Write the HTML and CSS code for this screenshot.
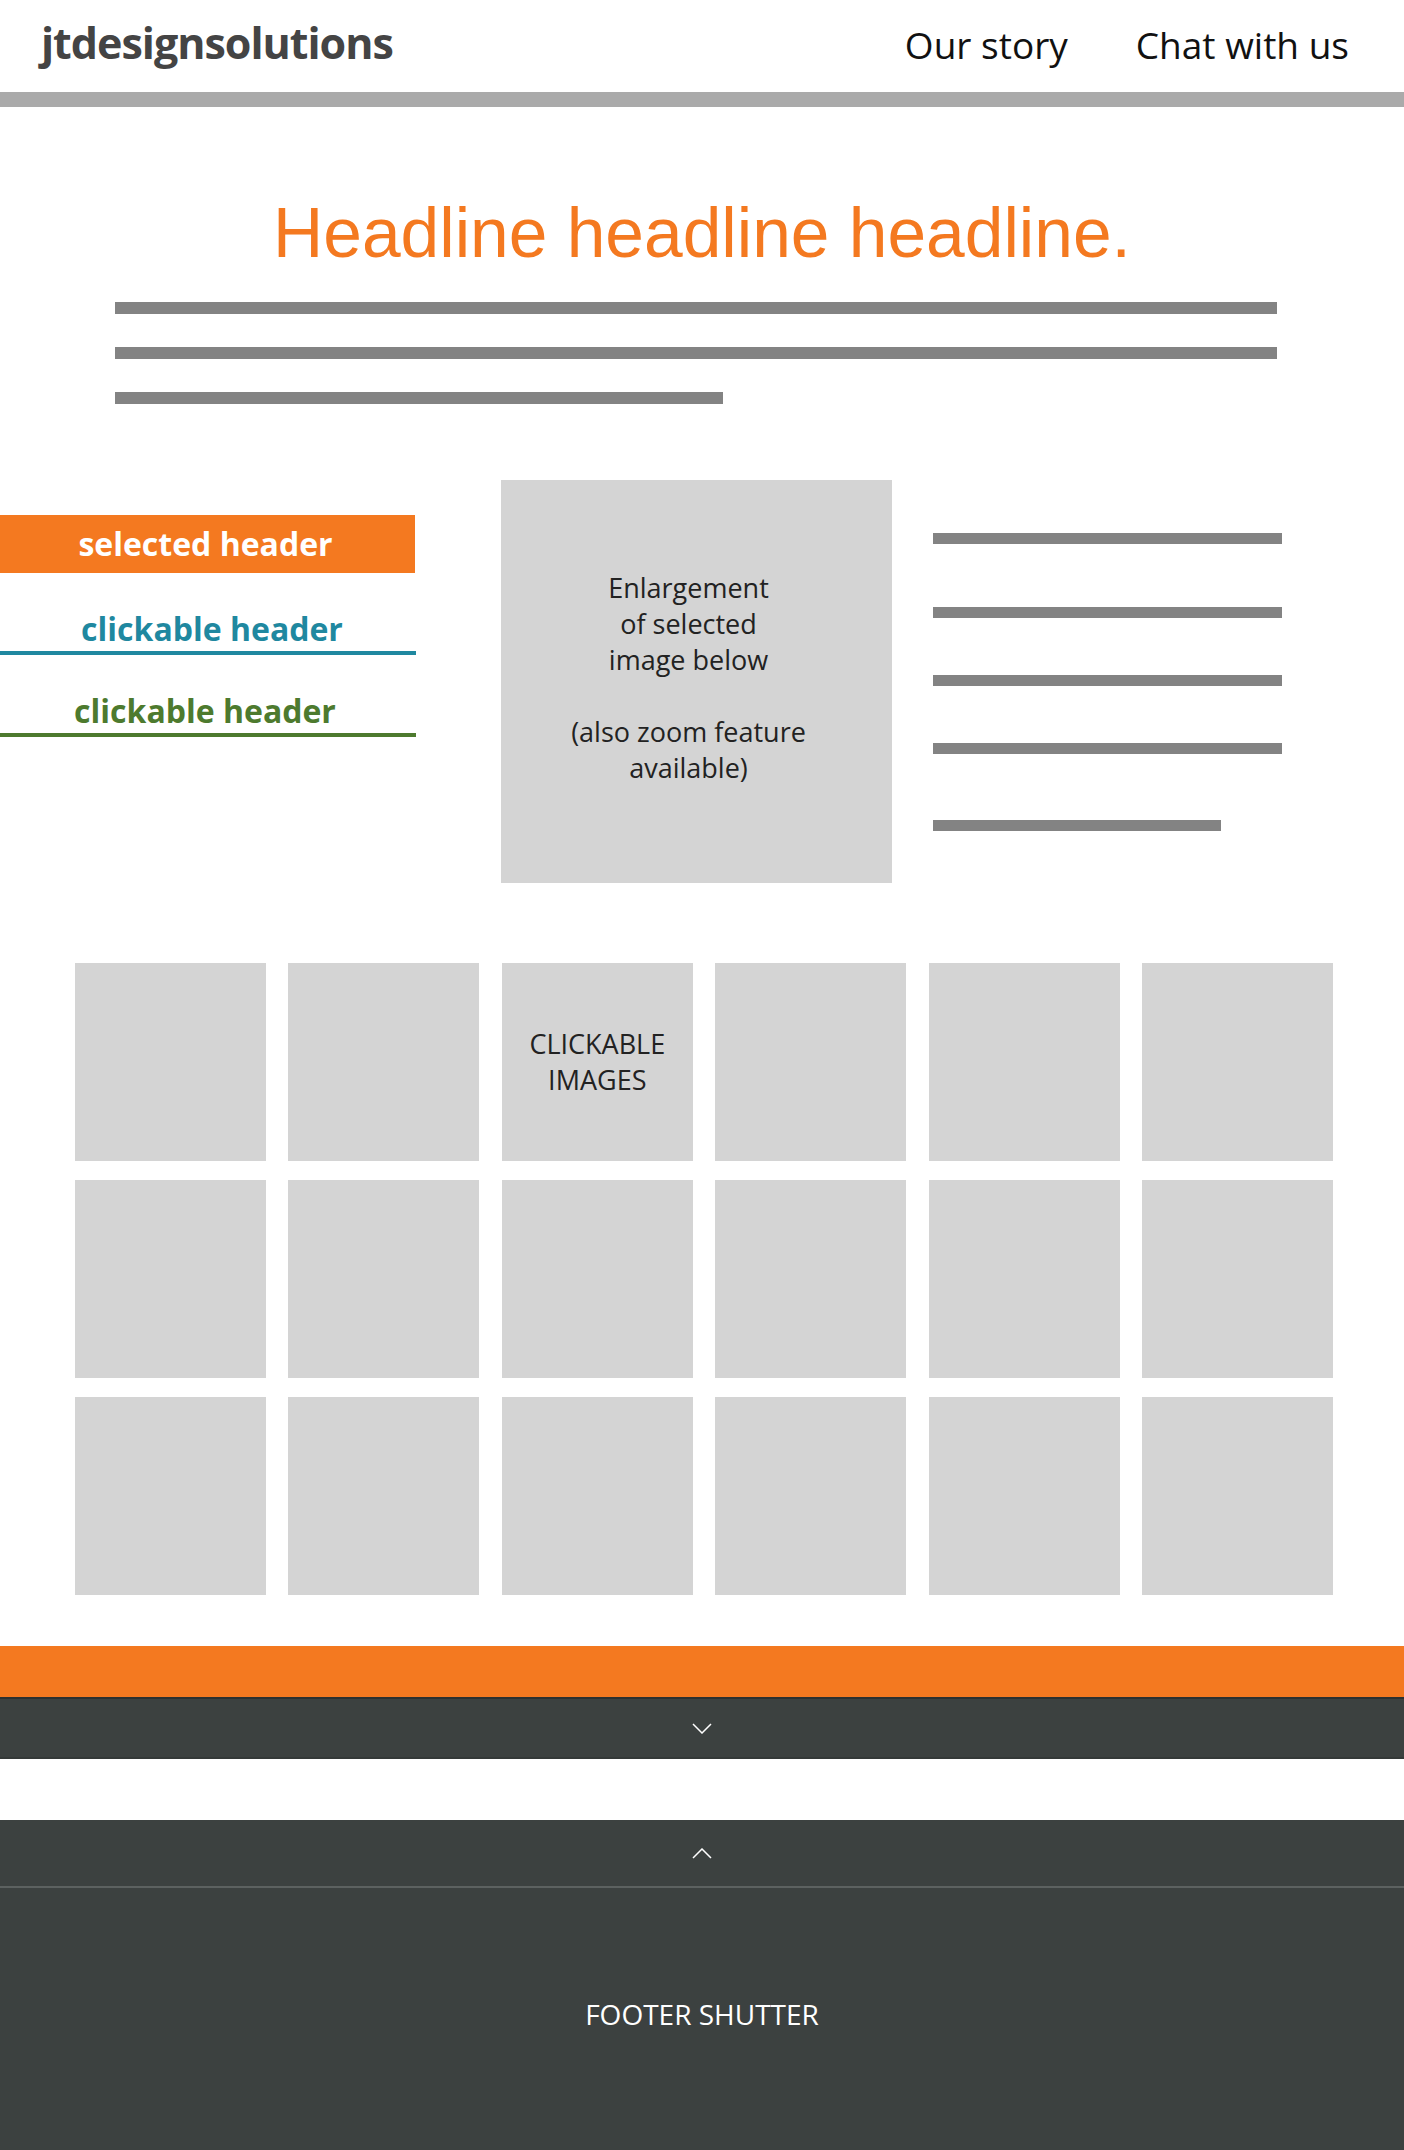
FILE: index.html
```html
<!DOCTYPE html>
<html lang="en">
<head>
    <meta charset="UTF-8">
    <meta name="viewport" content="width=device-width, initial-scale=1.0">
    <title>jtdesignsolutions - gallery wireframe</title>
    <link rel="stylesheet" href="styles.css">
</head>
<body>
    <header class="header">
        <div class="logo">jtdesignsolutions</div>
        <nav class="nav">
            <a href="#">Our story</a>
            <a href="#">Chat with us</a>
        </nav>
    </header>

    <section class="intro">
        <h1 class="headline">Headline headline headline.</h1>
        <div class="text-lines">
            <div class="line"></div>
            <div class="line"></div>
            <div class="line short"></div>
        </div>
    </section>

    <section class="feature">
        <div class="tabs">
            <div class="tab selected">selected header</div>
            <div class="tab teal">clickable header</div>
            <div class="tab green">clickable header</div>
        </div>
        <div class="enlarge">
            <p>Enlargement<br>of selected<br>image below<br><br>(also zoom feature<br>available)</p>
        </div>
        <div class="side-lines">
            <div class="line"></div>
            <div class="line"></div>
            <div class="line"></div>
            <div class="line"></div>
            <div class="line short"></div>
        </div>
    </section>

    <section class="thumbs">
        <div class="thumb"></div>
        <div class="thumb"></div>
        <div class="thumb">CLICKABLE<br>IMAGES</div>
        <div class="thumb"></div>
        <div class="thumb"></div>
        <div class="thumb"></div>
        <div class="thumb"></div>
        <div class="thumb"></div>
        <div class="thumb"></div>
        <div class="thumb"></div>
        <div class="thumb"></div>
        <div class="thumb"></div>
        <div class="thumb"></div>
        <div class="thumb"></div>
        <div class="thumb"></div>
        <div class="thumb"></div>
        <div class="thumb"></div>
        <div class="thumb"></div>
    </section>

    <div class="orange-band"></div>
    <div class="shutter-bar">
        <svg width="20" height="11" viewBox="0 0 20 11"><polyline points="1,1 10,10 19,1" fill="none" stroke="#fff" stroke-width="1.5"/></svg>
    </div>

    <footer class="footer">
        <div class="footer-top">
            <svg width="20" height="11" viewBox="0 0 20 11"><polyline points="1,10 10,1 19,10" fill="none" stroke="#fff" stroke-width="1.5"/></svg>
        </div>
        <div class="footer-body">FOOTER SHUTTER</div>
    </footer>
</body>
</html>
```

FILE: styles.css
```css
* {
    margin: 0;
    padding: 0;
    box-sizing: border-box;
}

body {
    font-family: "Open Sans", "DejaVu Sans", sans-serif;
    background-color: #fff;
    color: #222;
}

.header {
    height: 107px;
    display: flex;
    align-items: center;
    justify-content: space-between;
    padding: 0 55px 4px 41px;
    border-bottom: 15px solid #aaaaaa;
}

.logo {
    font-size: 43px;
    font-weight: 700;
    color: #444;
    letter-spacing: -1px;
    margin-top: -4px;
}

.nav {
    display: flex;
    gap: 68px;
}

.nav a {
    color: #111;
    text-decoration: none;
    font-size: 37px;
}

.intro {
    padding-top: 86px;
}

.headline {
    font-family: "Liberation Sans", Arial, sans-serif;
    font-weight: normal;
    font-size: 69.5px;
    line-height: 80px;
    color: #f47920;
    text-align: center;
}

.text-lines {
    margin: 29px 0 0 115px;
    width: 1162px;
    display: flex;
    flex-direction: column;
    gap: 33px;
}

.line {
    height: 12px;
    background-color: #838383;
}

.text-lines .short {
    width: 608px;
}

.feature {
    margin-top: 76px;
    display: flex;
    align-items: flex-start;
}

.tabs {
    width: 416px;
    margin-top: 35px;
}

.tab {
    text-align: center;
    font-size: 32px;
    font-weight: 700;
    line-height: 40px;
}

.tab.selected {
    background-color: #f47920;
    color: #fff;
    height: 58px;
    line-height: 58px;
    width: 415px;
    padding-right: 4px;
}

.tab.teal {
    color: #1f88a0;
    padding: 36px 0 2px 8px;
    border-bottom: 4px solid #1f88a0;
}

.tab.green {
    color: #4d7a2e;
    padding: 36px 6px 2px 0;
    border-bottom: 4px solid #4d7a2e;
}

.enlarge {
    margin-left: 85px;
    width: 391px;
    height: 403px;
    background-color: #d4d4d4;
    display: flex;
    align-items: center;
    justify-content: center;
    text-align: center;
    font-size: 27px;
    line-height: 36px;
    padding: 0 16px 8px 0;
}

.side-lines {
    margin: 53px 0 0 41px;
    width: 349px;
}

.side-lines .line {
    height: 11px;
    margin-bottom: 63px;
}

.side-lines .line:nth-child(2),
.side-lines .line:nth-child(3) {
    margin-bottom: 57px;
}

.side-lines .line:nth-child(4) {
    margin-bottom: 66px;
}

.side-lines .short {
    width: 288px;
    margin-bottom: 0;
}

.thumbs {
    margin: 80px 0 0 75px;
    width: 1258px;
    display: grid;
    grid-template-columns: repeat(6, 1fr);
    column-gap: 22.4px;
    row-gap: 19px;
}

.thumb {
    height: 198px;
    background-color: #d4d4d4;
    display: flex;
    align-items: center;
    justify-content: center;
    text-align: center;
    font-size: 27px;
    line-height: 36px;
}

.orange-band {
    margin-top: 51px;
    height: 51px;
    background-color: #f47920;
}

.shutter-bar {
    height: 62px;
    background-color: #3c4140;
    border-top: 2px solid #2c302f;
    border-bottom: 2px solid #343938;
    display: flex;
    align-items: center;
    justify-content: center;
}

.footer {
    margin-top: 61px;
    background-color: #3c4140;
    color: #fff;
}

.footer-top {
    height: 68px;
    display: flex;
    align-items: center;
    justify-content: center;
    border-bottom: 2px solid #5c6160;
}

.footer-body {
    height: 262px;
    display: flex;
    align-items: center;
    justify-content: center;
    font-size: 28px;
    padding-bottom: 10px;
}
```
